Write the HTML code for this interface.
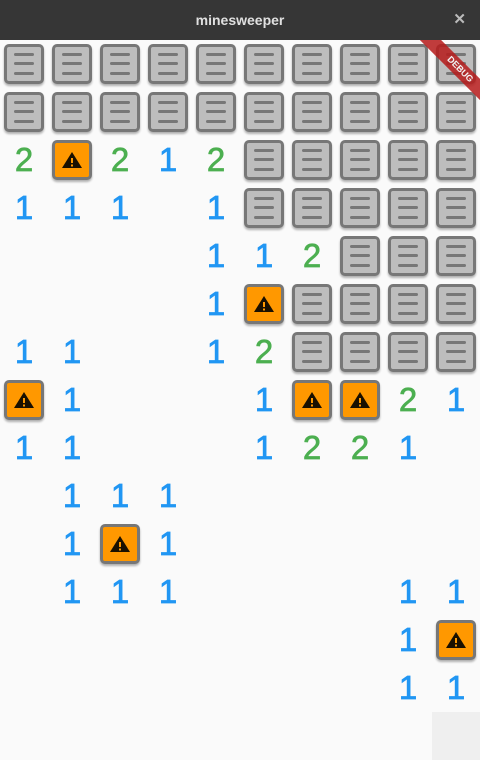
<!DOCTYPE html>
<html><head><meta charset="utf-8"><style>
*,*::before,*::after{margin:0;padding:0;box-sizing:border-box}
body{width:480px;height:760px;background:#fafafa;overflow:hidden;position:relative;font-family:"Liberation Sans",sans-serif}
.bar{height:40px;background:#363636;color:#e0e0e0;font-weight:bold;font-size:14px;text-align:center;line-height:40px;position:relative;z-index:2}
.bar .x{position:absolute;right:14px;top:0;font-size:15px;color:#bbb}
.g{display:grid;grid-template-columns:repeat(10,48px);grid-auto-rows:48px}
.g>div{position:relative;text-align:center;line-height:48px;font-size:33px;-webkit-text-stroke:0.7px currentColor}
.b{color:#2196f3}.n{color:#4caf50}
.t::before,.m::before{content:"";position:absolute;left:4px;top:4px;width:40px;height:40px;border:3px solid #777;border-radius:5px;background:#bdbdbd;box-shadow:0 2px 2px rgba(0,0,0,.3)}
.t::after{content:"";position:absolute;left:14px;top:13px;width:20px;height:3px;border-radius:2px;background:#777;box-shadow:0 9px #777,0 19px #777}
.m::before{background:#ff9800}
.m svg{position:absolute;left:13px;top:15px}
.gr{position:absolute;left:432px;top:712px;width:48px;height:48px;background:#efefef}
.dbg{position:absolute;right:-30px;top:62px;width:100px;height:15px;background:#b71c1c;opacity:.85;color:#fff;font-size:9px;font-weight:bold;text-align:center;line-height:15px;transform:rotate(45deg);z-index:1}
</style></head><body>
<div class="bar">minesweeper<span class="x">✕</span></div>
<div class="g">
<div class="t"></div><div class="t"></div><div class="t"></div><div class="t"></div><div class="t"></div><div class="t"></div><div class="t"></div><div class="t"></div><div class="t"></div><div class="t"></div>
<div class="t"></div><div class="t"></div><div class="t"></div><div class="t"></div><div class="t"></div><div class="t"></div><div class="t"></div><div class="t"></div><div class="t"></div><div class="t"></div>
<div class="n">2</div><div class="m"><svg width="22" height="18" viewBox="0 0 22 18"><path d="M11 1 L21 17 L1 17Z" fill="#1a1000"/><rect x="10" y="7" width="2" height="5" fill="#ff9800"/><rect x="10" y="13.5" width="2" height="2" fill="#ff9800"/></svg></div><div class="n">2</div><div class="b">1</div><div class="n">2</div><div class="t"></div><div class="t"></div><div class="t"></div><div class="t"></div><div class="t"></div>
<div class="b">1</div><div class="b">1</div><div class="b">1</div><div></div><div class="b">1</div><div class="t"></div><div class="t"></div><div class="t"></div><div class="t"></div><div class="t"></div>
<div></div><div></div><div></div><div></div><div class="b">1</div><div class="b">1</div><div class="n">2</div><div class="t"></div><div class="t"></div><div class="t"></div>
<div></div><div></div><div></div><div></div><div class="b">1</div><div class="m"><svg width="22" height="18" viewBox="0 0 22 18"><path d="M11 1 L21 17 L1 17Z" fill="#1a1000"/><rect x="10" y="7" width="2" height="5" fill="#ff9800"/><rect x="10" y="13.5" width="2" height="2" fill="#ff9800"/></svg></div><div class="t"></div><div class="t"></div><div class="t"></div><div class="t"></div>
<div class="b">1</div><div class="b">1</div><div></div><div></div><div class="b">1</div><div class="n">2</div><div class="t"></div><div class="t"></div><div class="t"></div><div class="t"></div>
<div class="m"><svg width="22" height="18" viewBox="0 0 22 18"><path d="M11 1 L21 17 L1 17Z" fill="#1a1000"/><rect x="10" y="7" width="2" height="5" fill="#ff9800"/><rect x="10" y="13.5" width="2" height="2" fill="#ff9800"/></svg></div><div class="b">1</div><div></div><div></div><div></div><div class="b">1</div><div class="m"><svg width="22" height="18" viewBox="0 0 22 18"><path d="M11 1 L21 17 L1 17Z" fill="#1a1000"/><rect x="10" y="7" width="2" height="5" fill="#ff9800"/><rect x="10" y="13.5" width="2" height="2" fill="#ff9800"/></svg></div><div class="m"><svg width="22" height="18" viewBox="0 0 22 18"><path d="M11 1 L21 17 L1 17Z" fill="#1a1000"/><rect x="10" y="7" width="2" height="5" fill="#ff9800"/><rect x="10" y="13.5" width="2" height="2" fill="#ff9800"/></svg></div><div class="n">2</div><div class="b">1</div>
<div class="b">1</div><div class="b">1</div><div></div><div></div><div></div><div class="b">1</div><div class="n">2</div><div class="n">2</div><div class="b">1</div><div></div>
<div></div><div class="b">1</div><div class="b">1</div><div class="b">1</div><div></div><div></div><div></div><div></div><div></div><div></div>
<div></div><div class="b">1</div><div class="m"><svg width="22" height="18" viewBox="0 0 22 18"><path d="M11 1 L21 17 L1 17Z" fill="#1a1000"/><rect x="10" y="7" width="2" height="5" fill="#ff9800"/><rect x="10" y="13.5" width="2" height="2" fill="#ff9800"/></svg></div><div class="b">1</div><div></div><div></div><div></div><div></div><div></div><div></div>
<div></div><div class="b">1</div><div class="b">1</div><div class="b">1</div><div></div><div></div><div></div><div></div><div class="b">1</div><div class="b">1</div>
<div></div><div></div><div></div><div></div><div></div><div></div><div></div><div></div><div class="b">1</div><div class="m"><svg width="22" height="18" viewBox="0 0 22 18"><path d="M11 1 L21 17 L1 17Z" fill="#1a1000"/><rect x="10" y="7" width="2" height="5" fill="#ff9800"/><rect x="10" y="13.5" width="2" height="2" fill="#ff9800"/></svg></div>
<div></div><div></div><div></div><div></div><div></div><div></div><div></div><div></div><div class="b">1</div><div class="b">1</div>
</div>
<div class="gr"></div>
<div class="dbg">DEBUG</div>
</body></html>
